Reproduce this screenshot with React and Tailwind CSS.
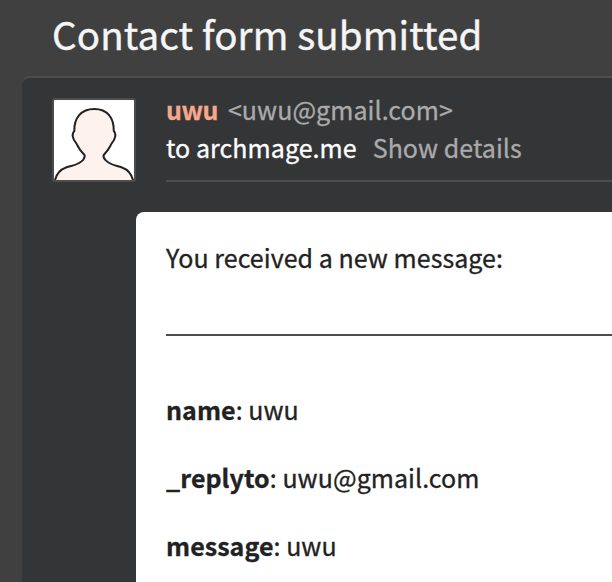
const fields = [
  { label: "name", value: "uwu" },
  { label: "_replyto", value: "uwu@gmail.com" },
  { label: "message", value: "uwu" },
];

function Avatar() {
  return (
    <svg className="block size-[84px] shrink-0" viewBox="0 0 84 84" fill="none">
      <rect x="1" y="1" width="82" height="82" rx="2" fill="#fff" stroke="#4d4c4c" strokeWidth="2" />
      <path
        d="M3 82C4.500 76 8.500 71.500 14 69.500C20 67.300 27 67 31 62C32.500 60 33 58.500 32.500 57C29.500 54 27.500 51.500 26 48.500C24.500 45.500 23.500 44 22 42C20.500 39 20 35.500 22.300 33C22 20 29 11 42.300 11C55.500 11 62 20 61.800 33C64 35.500 63.500 39 62 42C60.500 44 59.500 45.500 58 48.500C56.500 51.500 54.500 54 51.700 57C51.200 58.500 52 60.500 53.500 62C57.500 67 64 67.300 70 69.500C75.500 71.500 79.500 76 81 82"
        fill="#fdf2ee"
        stroke="#222"
        strokeWidth="2"
      />
      <path d="M1 2V81Q1 83 3 83H81Q83 83 83 81V2" stroke="#4d4c4c" strokeWidth="2" />
    </svg>
  );
}

export default function App() {
  return (
    <div className="flex h-[582px] w-[612px] flex-col overflow-hidden whitespace-nowrap bg-[#404040] pl-[22px] font-['Noto_Sans_CJK_SC',sans-serif] text-[25px] leading-[38px] tracking-[0.05px] text-[#222] [-webkit-text-stroke:0.3px]">
      <h1 className="h-[76px] shrink-0 pl-[30px] pt-2 text-[38.5px] font-normal leading-[50px] tracking-[0.12px] text-[#f5f5f5] [-webkit-text-stroke:0.4px] [font-feature-settings:'liga'_0,'clig'_0,'calt'_0,'ccmp'_0]">Contact form submitted</h1>
      <article className="flex w-[620px] grow flex-col rounded-tl-lg border-t-2 border-[#4d4d4d] bg-[#343537] pl-[30px] pt-5">
        <header className="flex h-[114px] shrink-0 gap-[30px]">
          <Avatar />
          <div className="h-[84px] grow border-b-2 border-[#4d4d4d]">
            <div className="-mt-2 flex h-[38px] gap-[10px] text-[#aaa]">
              <span className="font-bold tracking-[-0.5px] text-[#f5a78a]">uwu</span>
              <span>&lt;uwu@gmail.com&gt;</span>
            </div>
            <div className="flex h-[38px] gap-4 text-[#aaa]">
              <span className="text-white">to archmage.me</span>
              <span>Show details</span>
            </div>
          </div>
        </header>
        <section className="ml-[84px] grow rounded-tl-lg bg-white pl-[30px] pt-[26px]">
          <p>You received a new message:</p>
          <hr className="mb-[54px] mt-[58px] border-t-2 border-[#4d4d4d]" />
          <div className="flex flex-col gap-[30px]">
            {fields.map(({ label, value }) => (
              <p key={label}>
                <strong className="font-bold">{label}</strong>: {value}
              </p>
            ))}
          </div>
        </section>
      </article>
    </div>
  );
}
